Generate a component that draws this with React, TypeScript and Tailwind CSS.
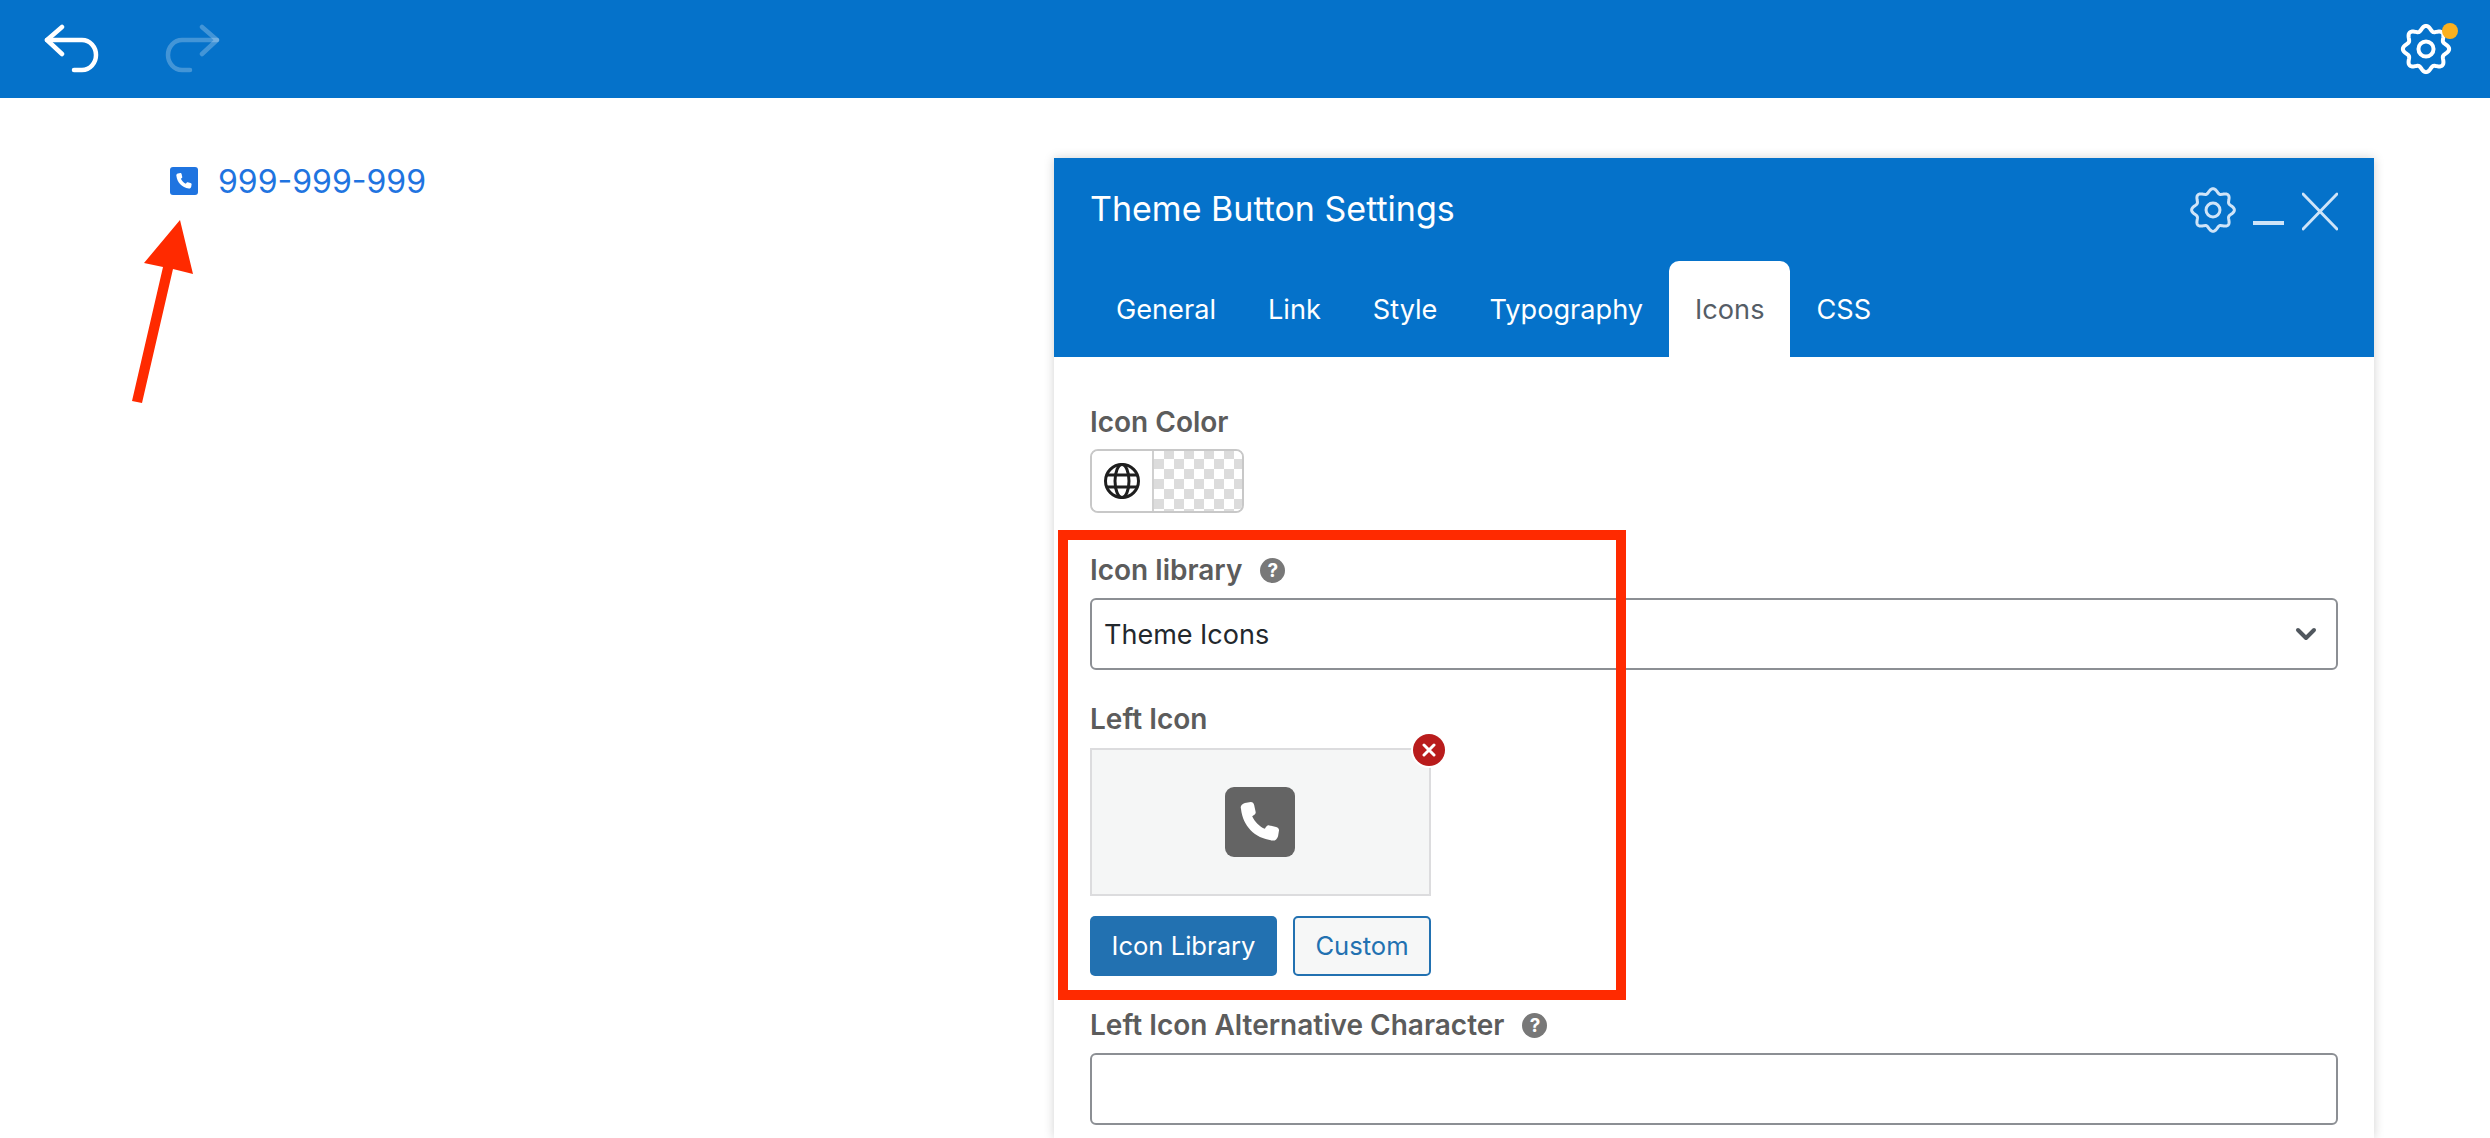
import { ChevronDown } from "lucide-react";

const BLUE = "bg-[#0572ca]";

// wavy gear outline, n bumps around a circle
function gearPath(cx: number, cy: number, r: number, amp: number, n = 8) {
  const pts: string[] = [];
  for (let i = 0; i <= 160; i++) {
    const t = (i / 160) * Math.PI * 2;
    const rad = r + amp * Math.cos(n * t);
    const a = t - Math.PI / 2;
    pts.push(`${(cx + rad * Math.cos(a)).toFixed(2)} ${(cy + rad * Math.sin(a)).toFixed(2)}`);
  }
  return "M" + pts.join("L") + "Z";
}

function Gear({ size, stroke, color }: { size: number; stroke: number; color: string }) {
  const c = size / 2;
  return (
    <svg width={size} height={size} viewBox={`0 0 ${size} ${size}`} fill="none" stroke={color} strokeWidth={stroke}>
      <path d={gearPath(c, c, size * 0.4, size * 0.045)} strokeLinejoin="round" />
      <circle cx={c} cy={c} r={size * 0.145} />
    </svg>
  );
}

function PhoneIcon({ size }: { size: number }) {
  return (
    <svg width={size} height={size} viewBox="0 0 41 41" fill="#fff">
      <path d="M1 7C0 4 2 2 5 1l6-1c2 0 3 1 3.500 3L16 10c.5 2-1 3-3.500 4.500C15 20 20 25 25.500 27.500 27 25 28 23.500 30 24l7 1.500c2 .5 3 1.500 3 3.500l-1 6c-1 3-3 5-6 4.500C15 37 3 25 1 7z" />
    </svg>
  );
}

function Help() {
  return (
    <span className="ml-[18px] flex h-[25px] w-[25px] items-center justify-center rounded-full bg-[#787878] text-[19px] font-bold leading-none text-white">
      ?
    </span>
  );
}

function Label({ text, help }: { text: string; help?: boolean }) {
  return (
    <div className="flex h-[32px] items-center text-[28px] font-semibold leading-[32px] text-[#5c5c5c]">
      {text}
      {help && <Help />}
    </div>
  );
}

function Tab({ name, active }: { name: string; active?: boolean }) {
  return (
    <div
      className={
        active
          ? "flex h-[96px] items-center rounded-t-[10px] bg-white px-[26px] pt-[2px] text-[#555d66]"
          : "flex h-[96px] items-center px-[26px] pt-[2px] text-white"
      }
    >
      {name}
    </div>
  );
}

function TopBar() {
  return (
    <header className={`flex h-[98px] shrink-0 items-center justify-between ${BLUE} pl-[44px] pr-[38px]`}>
      <div className="flex items-center gap-[64px]">
        <svg width="56" height="52" viewBox="0 0 56 52" fill="none" stroke="#fff" strokeWidth="4.5" strokeLinecap="round" strokeLinejoin="round">
          <path d="M18 4 3 17l15 14" />
          <path d="M3 17h35c8 0 14 7 14 15s-6 15-14 15h-8" />
        </svg>
        <svg width="56" height="52" viewBox="0 0 56 52" fill="none" stroke="#ffffff" strokeOpacity="0.25" strokeWidth="4.5" strokeLinecap="round" strokeLinejoin="round">
          <path d="M38 4l15 13-15 14" />
          <path d="M53 17H18C10 17 4 24 4 32s6 15 14 15h8" />
        </svg>
      </div>
      <div className="relative">
        <Gear size={52} stroke={4} color="#ffffff" />
        <span className="absolute right-[-6px] top-0 h-[16px] w-[16px] rounded-full bg-[#fbb01f]" />
      </div>
    </header>
  );
}

function PanelHeader() {
  return (
    <div className={BLUE}>
      <div className="flex h-[103px] items-start justify-between pl-[36px] pr-[36px]">
        <div className="mt-[29px] text-[34px] leading-[44px] text-white">Theme Button Settings</div>
        <div className="mt-[28px] flex items-start">
          <Gear size={48} stroke={3} color="#cfe4f8" />
          <svg width="31" height="48" viewBox="0 0 31 48" className="ml-[16px]" stroke="#cfe4f8" strokeWidth="4">
            <path d="M0 37h31" />
          </svg>
          <svg width="36" height="48" viewBox="0 0 36 48" className="ml-[18px]" stroke="#cfe4f8" strokeWidth="3" strokeLinecap="round">
            <path d="M1 8l34 35M35 8 1 43" />
          </svg>
        </div>
      </div>
      <div className="flex pl-[36px] text-[27.15px]">
        <Tab name="General" />
        <Tab name="Link" />
        <Tab name="Style" />
        <Tab name="Typography" />
        <Tab name="Icons" active />
        <Tab name="CSS" />
      </div>
    </div>
  );
}

function ColorPicker() {
  return (
    <div className="mt-[11px] flex h-[64px] w-[154px] overflow-hidden rounded-[8px] border-2 border-[#c8c8c8]">
      <div className="flex w-[62px] shrink-0 items-center justify-center border-r-2 border-[#d0d0d0] bg-white">
        <svg width="38" height="38" viewBox="0 0 38 38" fill="none" stroke="#1e1e1e" strokeWidth="3">
          <circle cx="19" cy="19" r="16.500" />
          <ellipse cx="19" cy="19" rx="7" ry="16.500" />
          <path d="M3 13h32M3 25h32" />
        </svg>
      </div>
      <div className="flex-1 bg-[repeating-conic-gradient(#dcdcdc_0_25%,#ffffff_0_50%)] bg-[length:20px_20px] bg-[position:0_-2px]" />
    </div>
  );
}

function LeftIconField() {
  return (
    <div className="w-[341px]">
      <div className="relative mt-[13px] flex h-[148px] items-center justify-center border-2 border-[#dcdcde] bg-[#f5f6f6] pr-[2px]">
        <div className="flex h-[70px] w-[70px] items-center justify-center rounded-[9px] bg-[#646464]">
          <PhoneIcon size={40} />
        </div>
        <span className="absolute right-[-16px] top-[-16px] flex h-[32px] w-[32px] items-center justify-center rounded-full bg-[#b91c1c] ring-2 ring-white">
          <svg width="14" height="14" viewBox="0 0 14 14" stroke="#fff" strokeWidth="3" strokeLinecap="round">
            <path d="M2 2l10 10M12 2 2 12" />
          </svg>
        </span>
      </div>
      <div className="mt-[20px] flex justify-between text-[25.6px]">
        <button className="h-[60px] w-[187px] rounded-[5px] bg-[#2271b1] text-white">Icon Library</button>
        <button className="h-[60px] w-[138px] rounded-[5px] border-2 border-[#2271b1] bg-[#f6f7f7] text-[#2271b1]">Custom</button>
      </div>
    </div>
  );
}

function SettingsPanel() {
  return (
    <section className="relative mt-[60px] w-[1320px] bg-white shadow-[0_0_10px_rgba(0,0,0,0.18)]">
      <PanelHeader />
      <div className="px-[36px] pt-[49px]">
        <Label text="Icon Color" />
        <ColorPicker />

        <div className="mt-[41px]">
          <Label text="Icon library" help />
        </div>
        <div className="mt-[12px] flex h-[72px] w-[1248px] items-center justify-between rounded-[6px] border-2 border-[#8c8f94] pl-[12px] pr-[14px] text-[27px] text-[#23282d]">
          <span className="pt-[3px]">Theme Icons</span>
          <ChevronDown size={32} strokeWidth={3} color="#50575e" />
        </div>

        <div className="mt-[33px]">
          <Label text="Left Icon" />
        </div>
        <LeftIconField />

        <div className="mt-[33px]">
          <Label text="Left Icon Alternative Character" help />
        </div>
        <input className="mt-[12px] block h-[72px] w-[1248px] rounded-[6px] border-2 border-[#8c8f94] bg-white" />
      </div>

      {/* red annotation frame */}
      <div className="absolute left-[4px] top-[372px] h-[470px] w-[568px] border-[10px] border-[#ff2a00]" />
    </section>
  );
}

export default function App() {
  return (
    <div className="flex h-[1138px] w-[2490px] flex-col overflow-hidden bg-white font-[Inter,sans-serif]">
      <TopBar />
      <main className="relative flex flex-1">
        <div className="w-[1054px] shrink-0 pl-[170px] pt-[68px]">
          <div className="flex items-center gap-[20px] text-[32px] leading-[28px] text-[#1f74e0]">
            <span className="flex h-[28px] w-[28px] items-center justify-center rounded-[3px] bg-[#1f74e0]">
              <PhoneIcon size={16} />
            </span>
            <span className="pt-[2px]">999-999-999</span>
          </div>
        </div>
        <SettingsPanel />

        {/* red annotation arrow */}
        <svg className="absolute left-[130px] top-[120px]" width="66" height="186" viewBox="0 0 66 186" fill="#ff2a00">
          <path d="M50 2 14 45l19 4L2 183l10 2 31-134 20 5z" />
        </svg>
      </main>
    </div>
  );
}
